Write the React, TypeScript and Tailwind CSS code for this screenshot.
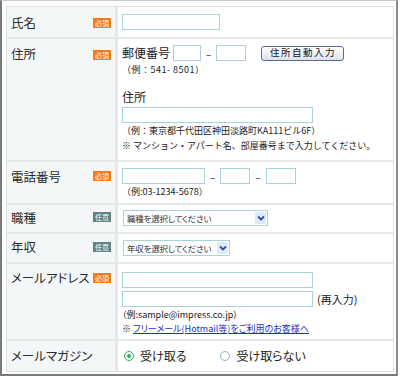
import React from "react";

const jp = { fontFamily: '"Noto Sans CJK JP", "Noto Sans", sans-serif' };

function Badge({ kind }: { kind: "req" | "opt" }) {
  return (
    <span
      className={`flex h-[10px] w-[18px] items-center justify-center text-[7px] leading-none text-white ${
        kind === "req" ? "bg-[#f07a1c]" : "bg-[#5e8584]"
      }`}
    >
      {kind === "req" ? "必須" : "任意"}
    </span>
  );
}

function Label({ text, kind, top = 11, badgeTop = 11 }: { text: string; kind?: "req" | "opt"; top?: number; badgeTop?: number }) {
  return (
    <div className="relative bg-[#f3f7f7]">
      <span className="absolute left-[4px] whitespace-nowrap text-[12.5px] leading-none text-[#2a2a2a]" style={{ top }}>
        {text}
      </span>
      {kind && (
        <span className="absolute left-[86px]" style={{ top: badgeTop }}>
          <Badge kind={kind} />
        </span>
      )}
    </div>
  );
}

function Input({ w }: { w: number }) {
  return <div className="h-[16px] border border-[#a9d3d9] bg-white" style={{ width: w }} />;
}

function Select({ w, text }: { w: number; text: string }) {
  return (
    <div className="flex h-[16px] items-center border border-[#a9d3d9] bg-white" style={{ width: w }}>
      <span className="flex-1 whitespace-nowrap pl-[3px] text-[8.5px] leading-none tracking-[-0.2px] text-[#333]">{text}</span>
      <span className="mr-[1px] flex h-[12px] w-[11px] shrink-0 items-center justify-center bg-[#dfeaf7]">
        <svg width="8" height="6" viewBox="0 0 8 6">
          <path d="M1 1.5 L4 4.5 L7 1.5" fill="none" stroke="#2a4fa8" strokeWidth="1.8" />
        </svg>
      </span>
    </div>
  );
}

export default function App() {
  return (
    <div className="h-[377px] w-[400px] bg-white [font-feature-settings:'palt']" style={jp}>
      <div className="h-[376px] w-[398px] border-b-2 border-l-2 border-r-2 border-t border-b-[#7a7a7a] border-l-[#7a7a7a] border-r-[#8a8a8a] border-t-[#c8c8c8] pl-[4px] pt-[5px]">
        <div className="grid w-[388px] grid-cols-[108px_275px] grid-rows-[30px_121px_41px_27px_28px_75px_30px] gap-x-[3px] gap-y-[2px] border border-[#dde3e3] bg-[#e3e8e8]">
          {/* 氏名 */}
          <Label text="氏名" kind="req" top={10} badgeTop={11} />
          <div className="bg-white pl-[4px] pt-[7px]">
            <Input w={98} />
          </div>

          {/* 住所 */}
          <Label text="住所" kind="req" top={9} badgeTop={11} />
          <div className="bg-white pl-[4px] pt-[6px] text-[#222]">
            <div className="flex items-center">
              <span className="text-[12px] leading-none">郵便番号</span>
              <div className="ml-[3px]"><Input w={28} /></div>
              <span className="mx-[5px] text-[10px]">–</span>
              <Input w={30} />
              <div className="ml-[15px] flex h-[15px] w-[83px] items-center justify-center rounded-[3px] border border-[#5b6a8e] bg-gradient-to-b from-white to-[#dde2ec] text-[9.5px] leading-none tracking-[1.5px] text-[#111]">
                住所自動入力
              </div>
            </div>
            <div className="mt-[4px] text-[9px] leading-none tracking-[0.5px] [font-feature-settings:normal]">（例：541- 8501）</div>
            <div className="mt-[17px] text-[12px] leading-none">住所</div>
            <div className="mt-[4px]"><Input w={191} /></div>
            <div className="mt-[3px] text-[9px] leading-none [font-feature-settings:normal]">（例：東京都千代田区神田淡路町KA111ビル6F）</div>
            <div className="mt-[6px] text-[9px] leading-none [font-feature-settings:normal]">※ マンション・アパート名、部屋番号まで入力してください。</div>
          </div>

          {/* 電話番号 */}
          <Label text="電話番号" kind="req" top={9} badgeTop={9} />
          <div className="bg-white pl-[4px] pt-[6px] text-[#222]">
            <div className="flex items-center">
              <Input w={83} />
              <span className="mx-[5px] text-[10px]">–</span>
              <Input w={30} />
              <span className="mx-[5px] text-[10px]">–</span>
              <Input w={30} />
            </div>
            <div className="mt-[3px] text-[9px] leading-none [font-feature-settings:normal]">（例:03-1234-5678）</div>
          </div>

          {/* 職種 */}
          <Label text="職種" kind="opt" top={7} badgeTop={7} />
          <div className="bg-white pl-[5px] pt-[5px]">
            <Select w={145} text="職種を選択してください" />
          </div>

          {/* 年収 */}
          <Label text="年収" kind="opt" top={7} badgeTop={8} />
          <div className="bg-white pl-[5px] pt-[6px]">
            <Select w={107} text="年収を選択してください" />
          </div>

          {/* メールアドレス */}
          <Label text="メールアドレス" kind="req" top={8} badgeTop={9} />
          <div className="bg-white pl-[4px] pt-[8px] text-[#222]">
            <Input w={191} />
            <div className="mt-[3px] flex items-center">
              <Input w={191} />
              <span className="ml-[4px] text-[11px] leading-none">(再入力)</span>
            </div>
            <div className="mt-[3px] text-[9px] leading-none">（例:sample@impress.co.jp）</div>
            <div className="mt-[5px] text-[9px] leading-none">
              ※ <span className="text-[#1a2fd0] underline">フリーメール(Hotmail等)をご利用のお客様へ</span>
            </div>
          </div>

          {/* メールマガジン */}
          <Label text="メールマガジン" top={9} />
          <div className="flex items-center bg-white pl-[6px] text-[12px] text-[#222]">
            <span className="flex h-[10px] w-[10px] items-center justify-center rounded-full border border-[#2fae5a] bg-white">
              <span className="h-[4px] w-[4px] rounded-full bg-[#2fae5a]" />
            </span>
            <span className="ml-[6px] leading-none">受け取る</span>
            <span className="ml-[34px] h-[10px] w-[10px] rounded-full border border-[#8fb3cf] bg-white" />
            <span className="ml-[6px] leading-none">受け取らない</span>
          </div>
        </div>
      </div>
    </div>
  );
}
